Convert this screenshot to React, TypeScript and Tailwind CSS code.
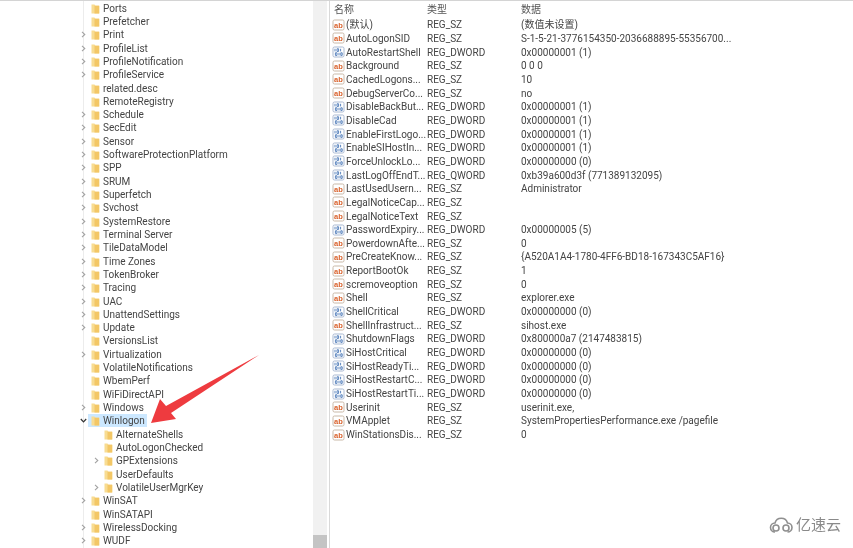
import React from "react";

type TreeRow = { name: string; arrow?: boolean; depth?: number; open?: boolean };

const treeRows: TreeRow[] = [
  { name: "Ports" },
  { name: "Prefetcher" },
  { name: "Print", arrow: true },
  { name: "ProfileList", arrow: true },
  { name: "ProfileNotification", arrow: true },
  { name: "ProfileService", arrow: true },
  { name: "related.desc" },
  { name: "RemoteRegistry" },
  { name: "Schedule", arrow: true },
  { name: "SecEdit", arrow: true },
  { name: "Sensor", arrow: true },
  { name: "SoftwareProtectionPlatform", arrow: true },
  { name: "SPP", arrow: true },
  { name: "SRUM", arrow: true },
  { name: "Superfetch", arrow: true },
  { name: "Svchost", arrow: true },
  { name: "SystemRestore", arrow: true },
  { name: "Terminal Server", arrow: true },
  { name: "TileDataModel", arrow: true },
  { name: "Time Zones", arrow: true },
  { name: "TokenBroker", arrow: true },
  { name: "Tracing", arrow: true },
  { name: "UAC", arrow: true },
  { name: "UnattendSettings", arrow: true },
  { name: "Update", arrow: true },
  { name: "VersionsList" },
  { name: "Virtualization", arrow: true },
  { name: "VolatileNotifications" },
  { name: "WbemPerf" },
  { name: "WiFiDirectAPI" },
  { name: "Windows", arrow: true },
  { name: "Winlogon", open: true },
  { name: "AlternateShells", depth: 1 },
  { name: "AutoLogonChecked", depth: 1 },
  { name: "GPExtensions", depth: 1, arrow: true },
  { name: "UserDefaults", depth: 1 },
  { name: "VolatileUserMgrKey", depth: 1, arrow: true },
  { name: "WinSAT", arrow: true },
  { name: "WinSATAPI" },
  { name: "WirelessDocking", arrow: true },
  { name: "WUDF", arrow: true },
];

const values: [string, string, string][] = [
  ["(默认)", "REG_SZ", "(数值未设置)"],
  ["AutoLogonSID", "REG_SZ", "S-1-5-21-3776154350-2036688895-55356700..."],
  ["AutoRestartShell", "REG_DWORD", "0x00000001 (1)"],
  ["Background", "REG_SZ", "0 0 0"],
  ["CachedLogons...", "REG_SZ", "10"],
  ["DebugServerCo...", "REG_SZ", "no"],
  ["DisableBackBut...", "REG_DWORD", "0x00000001 (1)"],
  ["DisableCad", "REG_DWORD", "0x00000001 (1)"],
  ["EnableFirstLogo...", "REG_DWORD", "0x00000001 (1)"],
  ["EnableSIHostIn...", "REG_DWORD", "0x00000001 (1)"],
  ["ForceUnlockLo...", "REG_DWORD", "0x00000000 (0)"],
  ["LastLogOffEndT...", "REG_QWORD", "0xb39a600d3f (771389132095)"],
  ["LastUsedUsern...", "REG_SZ", "Administrator"],
  ["LegalNoticeCap...", "REG_SZ", ""],
  ["LegalNoticeText", "REG_SZ", ""],
  ["PasswordExpiry...", "REG_DWORD", "0x00000005 (5)"],
  ["PowerdownAfte...", "REG_SZ", "0"],
  ["PreCreateKnow...", "REG_SZ", "{A520A1A4-1780-4FF6-BD18-167343C5AF16}"],
  ["ReportBootOk", "REG_SZ", "1"],
  ["scremoveoption", "REG_SZ", "0"],
  ["Shell", "REG_SZ", "explorer.exe"],
  ["ShellCritical", "REG_DWORD", "0x00000000 (0)"],
  ["ShellInfrastruct...", "REG_SZ", "sihost.exe"],
  ["ShutdownFlags", "REG_DWORD", "0x800000a7 (2147483815)"],
  ["SiHostCritical", "REG_DWORD", "0x00000000 (0)"],
  ["SiHostReadyTi...", "REG_DWORD", "0x00000000 (0)"],
  ["SiHostRestartC...", "REG_DWORD", "0x00000000 (0)"],
  ["SiHostRestartTi...", "REG_DWORD", "0x00000000 (0)"],
  ["Userinit", "REG_SZ", "userinit.exe,"],
  ["VMApplet", "REG_SZ", "SystemPropertiesPerformance.exe /pagefile"],
  ["WinStationsDis...", "REG_SZ", "0"],
];

const Folder = () => (
  <svg width="9" height="11" viewBox="0 0 9 11" className="shrink-0">
    <path d="M0.5 1.5h3l1 1.2h4v7.8h-8z" fill="#f8dc92" />
    <path d="M3.5 2.7h4.5v7.8H3.5z" fill="#f3c766" />
  </svg>
);

const Chevron = ({ open }: { open?: boolean }) => (
  <svg width="7" height="7" viewBox="0 0 7 7" className="shrink-0">
    {open ? (
      <path d="M0.8 2l2.7 2.8L6.2 2" fill="none" stroke="#333" strokeWidth="1.2" />
    ) : (
      <path d="M2 0.8l2.8 2.7L2 6.2" fill="none" stroke="#a2a2a2" strokeWidth="1.1" />
    )}
  </svg>
);

const ValueIcon = ({ kind }: { kind: string }) => (
  <svg width="13" height="12" viewBox="0 0 13 12" className="shrink-0">
    <rect x="1" y="1" width="11" height="10" rx="1.5" fill="#fff" stroke={kind === "REG_SZ" ? "#c9b9a8" : "#a9b9d2"} />
    {kind === "REG_SZ" ? (
      <text x="2" y="8.6" fontSize="7.5" fontWeight="700" fill="#d9602a" fontFamily="Liberation Sans, sans-serif">
        ab
      </text>
    ) : (
      <g fill="none" stroke="#4a78b8" strokeWidth="0.9">
        <path d="M3 2.8v2.6M5 2.8h1.6v2.6H5zM8.6 2.8v2.6" />
        <path d="M3.4 6.8h1.6v2.6H3.4zM7 6.8v2.6M8.8 6.8h1.4v2.6H8.8z" />
      </g>
    )}
  </svg>
);

const RegistryTree = () => (
  <div className="relative w-[313px] shrink-0 pl-[80px] pt-[0.5px]">
    {/* tree guide line */}
    <div className="absolute left-[83px] top-0 h-full border-l border-[#ececec]" />
    {treeRows.map((row) => {
      const isChild = row.depth === 1;
      return (
        <div key={row.name} className={`relative flex h-[13.325px] items-center ${isChild ? "pl-[13px]" : ""}`}>
          <div className="flex w-[8px] shrink-0 items-center">
            {row.arrow || row.open ? <Chevron open={row.open} /> : null}
          </div>
          <div className={`flex h-[13.3px] items-center pl-[3px] pr-[2px] ${row.open ? "bg-[#cce8ff]" : ""}`}>
            <Folder />
            <span className="ml-[3px] whitespace-nowrap leading-[13px]">{row.name}</span>
          </div>
        </div>
      );
    })}
  </div>
);

const ValuesPanel = () => (
  <div className="flex-1 pl-[2px]">
    <div className="flex h-[17px] items-center text-[#555]">
      <span className="w-[95px] pl-[2px]">名称</span>
      <span className="w-[94px]">类型</span>
      <span>数据</span>
    </div>
    {values.map(([name, kind, data]) => (
      <div key={name} className="flex h-[13.67px] items-center whitespace-nowrap">
        <div className="flex w-[95px] items-center">
          <ValueIcon kind={kind} />
          <span className="ml-[1px]">{name}</span>
        </div>
        <span className="w-[94px]">{kind}</span>
        <span>{data}</span>
      </div>
    ))}
  </div>
);

const App = () => {
  return (
    <div className="relative h-[548px] w-[853px] overflow-hidden bg-white font-['Roboto','Noto_Sans_CJK_SC',sans-serif] text-[10px] text-[#444] blur-[0.3px]">
      <div className="h-[1px] bg-[#d4d4d4]" />
      <div className="flex h-[547px]">
        <RegistryTree />
        {/* scrollbar */}
        <div className="flex w-[14px] shrink-0 flex-col justify-end bg-[#f1f1f1]">
          <div className="h-[13px] bg-[#c4c4c4]" />
        </div>
        <div className="w-[3px] shrink-0 border-r border-[#d9d9d9] bg-white" />
        <ValuesPanel />
      </div>

      {/* red annotation arrow */}
      <svg className="absolute left-0 top-0" width="853" height="548" viewBox="0 0 853 548">
        <path d="M259 355L171 413L176 419L151 423L160 399L166 406Z" fill="#ee3b3f" />
      </svg>

      {/* watermark */}
      <div className="absolute left-[768px] top-[516px] flex items-center gap-[1px] text-[#8a8a8a]">
        <svg width="27" height="18" viewBox="0 0 27 18" fill="none" stroke="#8f8f8f" strokeWidth="1.6">
          <path d="M7 16a4.5 4.5 0 1 1 0-9a6.5 6.5 0 0 1 12.5 0a4.5 4.5 0 1 1 0 9" />
          <circle cx="8" cy="12" r="3" />
          <circle cx="18" cy="12" r="3" />
        </svg>
        <span className="text-[15px] leading-[18px]">亿速云</span>
      </div>
    </div>
  );
};

export default App;
